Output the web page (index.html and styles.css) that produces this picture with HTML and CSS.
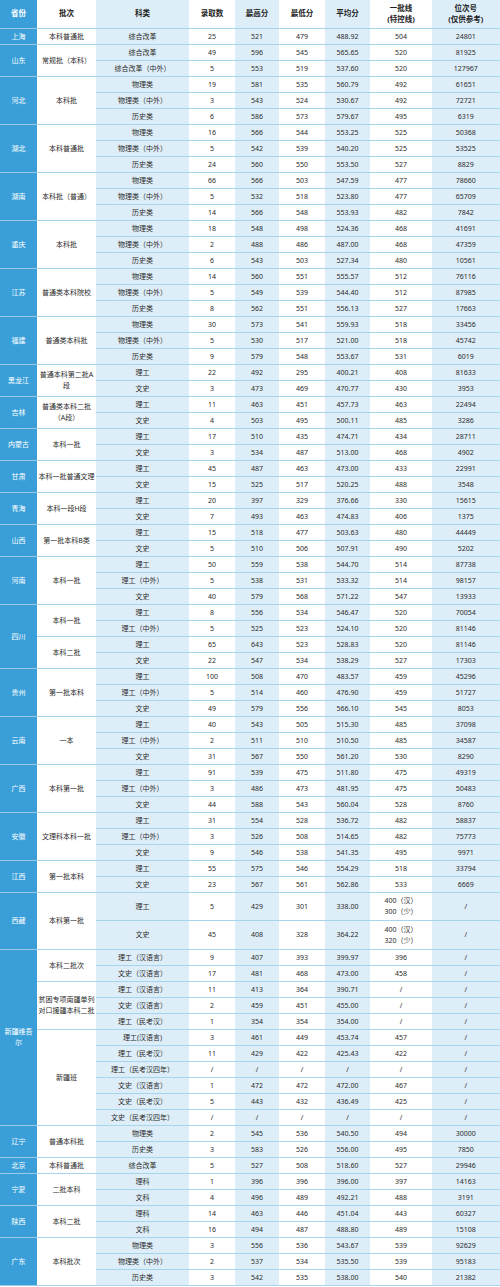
FILE: index.html
```html
<!DOCTYPE html>
<html lang="zh-CN">
<head>
<meta charset="utf-8">
<title>录取分数</title>
<link rel="stylesheet" href="styles.css">
</head>
<body>
<table class="score">
<colgroup>
<col class="c-prov"><col class="c-w c-batch"><col class="c-l c-type"><col class="c-w c-n"><col class="c-l c-max"><col class="c-w c-min"><col class="c-l c-avg"><col class="c-w c-line"><col class="c-l c-rank">
</colgroup>
<thead>
<tr class="head"><th class="prov">省份</th><th>批次</th><th>科类</th><th>录取数</th><th>最高分</th><th>最低分</th><th>平均分</th><th>一批线<br>(特控线)</th><th class="last">位次号<br>(仅供参考)</th></tr>
</thead>
<tbody>
<tr><td class="prov">上海</td><td>本科普通批</td><td>综合改革</td><td>25</td><td>521</td><td>479</td><td>488.92</td><td>504</td><td class="last">24801</td></tr>

<tr><td class="prov" rowspan="2">山东</td><td rowspan="2">常规批（本科）</td><td>综合改革</td><td>49</td><td>596</td><td>545</td><td>565.65</td><td>520</td><td class="last">81925</td></tr>
<tr><td>综合改革（中外）</td><td>5</td><td>553</td><td>519</td><td>537.60</td><td>520</td><td class="last">127967</td></tr>

<tr><td class="prov" rowspan="3">河北</td><td rowspan="3">本科批</td><td>物理类</td><td>19</td><td>581</td><td>535</td><td>560.79</td><td>492</td><td class="last">61651</td></tr>
<tr><td>物理类（中外）</td><td>3</td><td>543</td><td>524</td><td>530.67</td><td>492</td><td class="last">72721</td></tr>
<tr><td>历史类</td><td>6</td><td>586</td><td>573</td><td>579.67</td><td>495</td><td class="last">6319</td></tr>

<tr><td class="prov" rowspan="3">湖北</td><td rowspan="3">本科普通批</td><td>物理类</td><td>16</td><td>566</td><td>544</td><td>553.25</td><td>525</td><td class="last">50368</td></tr>
<tr><td>物理类（中外）</td><td>5</td><td>542</td><td>539</td><td>540.20</td><td>525</td><td class="last">53525</td></tr>
<tr><td>历史类</td><td>24</td><td>560</td><td>550</td><td>553.50</td><td>527</td><td class="last">8829</td></tr>

<tr><td class="prov" rowspan="3">湖南</td><td rowspan="3">本科批（普通）</td><td>物理类</td><td>66</td><td>566</td><td>503</td><td>547.59</td><td>477</td><td class="last">78660</td></tr>
<tr><td>物理类（中外）</td><td>5</td><td>532</td><td>518</td><td>523.80</td><td>477</td><td class="last">65709</td></tr>
<tr><td>历史类</td><td>14</td><td>566</td><td>548</td><td>553.93</td><td>482</td><td class="last">7842</td></tr>

<tr><td class="prov" rowspan="3">重庆</td><td rowspan="3">本科批</td><td>物理类</td><td>18</td><td>548</td><td>498</td><td>524.36</td><td>468</td><td class="last">41691</td></tr>
<tr><td>物理类（中外）</td><td>2</td><td>488</td><td>486</td><td>487.00</td><td>468</td><td class="last">47359</td></tr>
<tr><td>历史类</td><td>6</td><td>543</td><td>503</td><td>527.34</td><td>480</td><td class="last">10561</td></tr>

<tr><td class="prov" rowspan="3">江苏</td><td rowspan="3">普通类本科院校</td><td>物理类</td><td>14</td><td>560</td><td>551</td><td>555.57</td><td>512</td><td class="last">76116</td></tr>
<tr><td>物理类（中外）</td><td>5</td><td>549</td><td>539</td><td>544.40</td><td>512</td><td class="last">87985</td></tr>
<tr><td>历史类</td><td>8</td><td>562</td><td>551</td><td>556.13</td><td>527</td><td class="last">17663</td></tr>

<tr><td class="prov" rowspan="3">福建</td><td rowspan="3">普通类本科批</td><td>物理类</td><td>30</td><td>573</td><td>541</td><td>559.93</td><td>518</td><td class="last">33456</td></tr>
<tr><td>物理类（中外）</td><td>5</td><td>530</td><td>517</td><td>521.00</td><td>518</td><td class="last">45742</td></tr>
<tr><td>历史类</td><td>9</td><td>579</td><td>548</td><td>553.67</td><td>531</td><td class="last">6019</td></tr>

<tr><td class="prov" rowspan="2">黑龙江</td><td rowspan="2">普通本科第二批A段</td><td>理工</td><td>22</td><td>492</td><td>295</td><td>400.21</td><td>408</td><td class="last">81633</td></tr>
<tr><td>文史</td><td>3</td><td>473</td><td>469</td><td>470.77</td><td>430</td><td class="last">3953</td></tr>

<tr><td class="prov" rowspan="2">吉林</td><td rowspan="2">普通类本科二批（A段）</td><td>理工</td><td>11</td><td>463</td><td>451</td><td>457.73</td><td>463</td><td class="last">22494</td></tr>
<tr><td>文史</td><td>4</td><td>503</td><td>495</td><td>500.11</td><td>485</td><td class="last">3286</td></tr>

<tr><td class="prov" rowspan="2">内蒙古</td><td rowspan="2">本科一批</td><td>理工</td><td>17</td><td>510</td><td>435</td><td>474.71</td><td>434</td><td class="last">28711</td></tr>
<tr><td>文史</td><td>3</td><td>534</td><td>487</td><td>513.00</td><td>468</td><td class="last">4902</td></tr>

<tr><td class="prov" rowspan="2">甘肃</td><td rowspan="2">本科一批普通文理</td><td>理工</td><td>45</td><td>487</td><td>463</td><td>473.00</td><td>433</td><td class="last">22991</td></tr>
<tr><td>文史</td><td>15</td><td>525</td><td>517</td><td>520.25</td><td>488</td><td class="last">3548</td></tr>

<tr><td class="prov" rowspan="2">青海</td><td rowspan="2">本科一段H段</td><td>理工</td><td>20</td><td>397</td><td>329</td><td>376.66</td><td>330</td><td class="last">15615</td></tr>
<tr><td>文史</td><td>7</td><td>493</td><td>463</td><td>474.83</td><td>406</td><td class="last">1375</td></tr>

<tr><td class="prov" rowspan="2">山西</td><td rowspan="2">第一批本科B类</td><td>理工</td><td>15</td><td>518</td><td>477</td><td>503.63</td><td>480</td><td class="last">44449</td></tr>
<tr><td>文史</td><td>5</td><td>510</td><td>506</td><td>507.91</td><td>490</td><td class="last">5202</td></tr>

<tr><td class="prov" rowspan="3">河南</td><td rowspan="3">本科一批</td><td>理工</td><td>50</td><td>559</td><td>538</td><td>544.70</td><td>514</td><td class="last">87738</td></tr>
<tr><td>理工（中外）</td><td>5</td><td>538</td><td>531</td><td>533.32</td><td>514</td><td class="last">98157</td></tr>
<tr><td>文史</td><td>40</td><td>579</td><td>568</td><td>571.22</td><td>547</td><td class="last">13933</td></tr>

<tr><td class="prov" rowspan="4">四川</td><td rowspan="2">本科一批</td><td>理工</td><td>8</td><td>556</td><td>534</td><td>546.47</td><td>520</td><td class="last">70054</td></tr>
<tr><td>理工（中外）</td><td>5</td><td>525</td><td>523</td><td>524.10</td><td>520</td><td class="last">81146</td></tr>
<tr><td rowspan="2">本科二批</td><td>理工</td><td>65</td><td>643</td><td>523</td><td>528.83</td><td>520</td><td class="last">81146</td></tr>
<tr><td>文史</td><td>22</td><td>547</td><td>534</td><td>538.29</td><td>527</td><td class="last">17303</td></tr>

<tr><td class="prov" rowspan="3">贵州</td><td rowspan="3">第一批本科</td><td>理工</td><td>100</td><td>508</td><td>470</td><td>483.57</td><td>459</td><td class="last">45296</td></tr>
<tr><td>理工（中外）</td><td>5</td><td>514</td><td>460</td><td>476.90</td><td>459</td><td class="last">51727</td></tr>
<tr><td>文史</td><td>49</td><td>579</td><td>556</td><td>566.10</td><td>545</td><td class="last">8053</td></tr>

<tr><td class="prov" rowspan="3">云南</td><td rowspan="3">一本</td><td>理工</td><td>40</td><td>543</td><td>505</td><td>515.30</td><td>485</td><td class="last">37098</td></tr>
<tr><td>理工（中外）</td><td>2</td><td>511</td><td>510</td><td>510.50</td><td>485</td><td class="last">34587</td></tr>
<tr><td>文史</td><td>31</td><td>567</td><td>550</td><td>561.20</td><td>530</td><td class="last">8290</td></tr>

<tr><td class="prov" rowspan="3">广西</td><td rowspan="3">本科第一批</td><td>理工</td><td>91</td><td>539</td><td>475</td><td>511.80</td><td>475</td><td class="last">49319</td></tr>
<tr><td>理工（中外）</td><td>3</td><td>486</td><td>473</td><td>481.95</td><td>475</td><td class="last">50483</td></tr>
<tr><td>文史</td><td>44</td><td>588</td><td>543</td><td>560.04</td><td>528</td><td class="last">8760</td></tr>

<tr><td class="prov" rowspan="3">安徽</td><td rowspan="3">文理科本科一批</td><td>理工</td><td>31</td><td>554</td><td>528</td><td>536.72</td><td>482</td><td class="last">58837</td></tr>
<tr><td>理工（中外）</td><td>3</td><td>526</td><td>508</td><td>514.65</td><td>482</td><td class="last">75773</td></tr>
<tr><td>文史</td><td>9</td><td>546</td><td>538</td><td>541.35</td><td>495</td><td class="last">9971</td></tr>

<tr><td class="prov" rowspan="2">江西</td><td rowspan="2">第一批本科</td><td>理工</td><td>55</td><td>575</td><td>546</td><td>554.29</td><td>518</td><td class="last">33794</td></tr>
<tr><td>文史</td><td>23</td><td>567</td><td>561</td><td>562.86</td><td>533</td><td class="last">6669</td></tr>

<tr class="tall"><td class="prov" rowspan="2">西藏</td><td rowspan="2">本科第一批</td><td>理工</td><td>5</td><td>429</td><td>301</td><td>338.00</td><td>400（汉）<br>300（少）</td><td class="last">/</td></tr>
<tr class="tall"><td>文史</td><td>45</td><td>408</td><td>328</td><td>364.22</td><td>400（汉）<br>320（少）</td><td class="last">/</td></tr>

<tr><td class="prov" rowspan="11">新疆维吾尔</td><td rowspan="2">本科二批次</td><td>理工（汉语言）</td><td>9</td><td>407</td><td>393</td><td>399.97</td><td>396</td><td class="last">/</td></tr>
<tr><td>文史（汉语言）</td><td>17</td><td>481</td><td>468</td><td>473.00</td><td>458</td><td class="last">/</td></tr>
<tr><td rowspan="3">贫困专项南疆单列对口援疆本科二批</td><td>理工（汉语言）</td><td>11</td><td>413</td><td>364</td><td>390.71</td><td>/</td><td class="last">/</td></tr>
<tr><td>文史（汉语言）</td><td>2</td><td>459</td><td>451</td><td>455.00</td><td>/</td><td class="last">/</td></tr>
<tr><td>理工（民考汉）</td><td>1</td><td>354</td><td>354</td><td>354.00</td><td>/</td><td class="last">/</td></tr>
<tr><td rowspan="6">新疆班</td><td>理工(汉语言)</td><td>3</td><td>461</td><td>449</td><td>453.74</td><td>457</td><td class="last">/</td></tr>
<tr><td>理工（民考汉）</td><td>11</td><td>429</td><td>422</td><td>425.43</td><td>422</td><td class="last">/</td></tr>
<tr><td>理工（民考汉四年）</td><td>/</td><td>/</td><td>/</td><td>/</td><td>/</td><td class="last">/</td></tr>
<tr><td>文史（汉语言）</td><td>1</td><td>472</td><td>472</td><td>472.00</td><td>467</td><td class="last">/</td></tr>
<tr><td>文史（民考汉）</td><td>5</td><td>443</td><td>432</td><td>436.49</td><td>425</td><td class="last">/</td></tr>
<tr><td>文史（民考汉四年）</td><td>/</td><td>/</td><td>/</td><td>/</td><td>/</td><td class="last">/</td></tr>

<tr><td class="prov" rowspan="2">辽宁</td><td rowspan="2">普通本科批</td><td>物理类</td><td>2</td><td>545</td><td>536</td><td>540.50</td><td>494</td><td class="last">30000</td></tr>
<tr><td>历史类</td><td>3</td><td>583</td><td>526</td><td>556.00</td><td>495</td><td class="last">7850</td></tr>

<tr><td class="prov">北京</td><td>本科普通批</td><td>综合改革</td><td>5</td><td>527</td><td>508</td><td>518.60</td><td>527</td><td class="last">29946</td></tr>

<tr><td class="prov" rowspan="2">宁夏</td><td rowspan="2">二批本科</td><td>理科</td><td>1</td><td>396</td><td>396</td><td>396.00</td><td>397</td><td class="last">14163</td></tr>
<tr><td>文科</td><td>4</td><td>496</td><td>489</td><td>492.21</td><td>488</td><td class="last">3191</td></tr>

<tr><td class="prov" rowspan="2">陕西</td><td rowspan="2">本科二批</td><td>理科</td><td>14</td><td>463</td><td>446</td><td>451.04</td><td>443</td><td class="last">60327</td></tr>
<tr><td>文科</td><td>16</td><td>494</td><td>487</td><td>488.80</td><td>489</td><td class="last">15108</td></tr>

<tr><td class="prov" rowspan="3">广东</td><td rowspan="3">本科批次</td><td>物理类</td><td>3</td><td>556</td><td>536</td><td>543.67</td><td>539</td><td class="last">92629</td></tr>
<tr><td>物理类（中外）</td><td>2</td><td>537</td><td>534</td><td>535.50</td><td>539</td><td class="last">95183</td></tr>
<tr><td>历史类</td><td>3</td><td>542</td><td>535</td><td>538.00</td><td>540</td><td class="last">21382</td></tr>
</tbody>
</table>
</body>
</html>
```
FILE: styles.css
```css
html, body {
  margin: 0;
  padding: 0;
  background: #ffffff;
}

.score {
  border-collapse: collapse;
  table-layout: fixed;
  width: 500px;
  font-family: "Noto Sans", "Noto Sans CJK SC", sans-serif;
  font-size: 7px;
  color: #2b2b2b;
}

.c-prov { width: 37px; background: #3a9fd8; }
.c-batch { width: 59px; }
.c-type { width: 93px; }
.c-n { width: 46px; }
.c-max { width: 44px; }
.c-min { width: 46px; }
.c-avg { width: 45px; }
.c-line { width: 62px; }
.c-rank { width: 68px; }

.c-w { background: #ffffff; }
.c-l { background: #deeef8; }

.score th,
.score td {
  padding: 0 1px;
  text-align: center;
  vertical-align: middle;
  line-height: 11px;
  border-bottom: 1px solid #a9d4ee;
  font-weight: normal;
}

.score tr { height: 16px; }
.score tr.head { height: 28px; }
.score tr.tall { height: 28.5px; }

.score th {
  font-weight: bold;
  color: #222222;
  font-size: 7.5px;
}

.score .prov {
  background: #3a9fd8;
  color: #ffffff;
  padding: 0 3px;
  border-bottom: 1px solid #9ccbea;
}

.score .last {
  border-right: 1px solid #a9d4ee;
}
```
